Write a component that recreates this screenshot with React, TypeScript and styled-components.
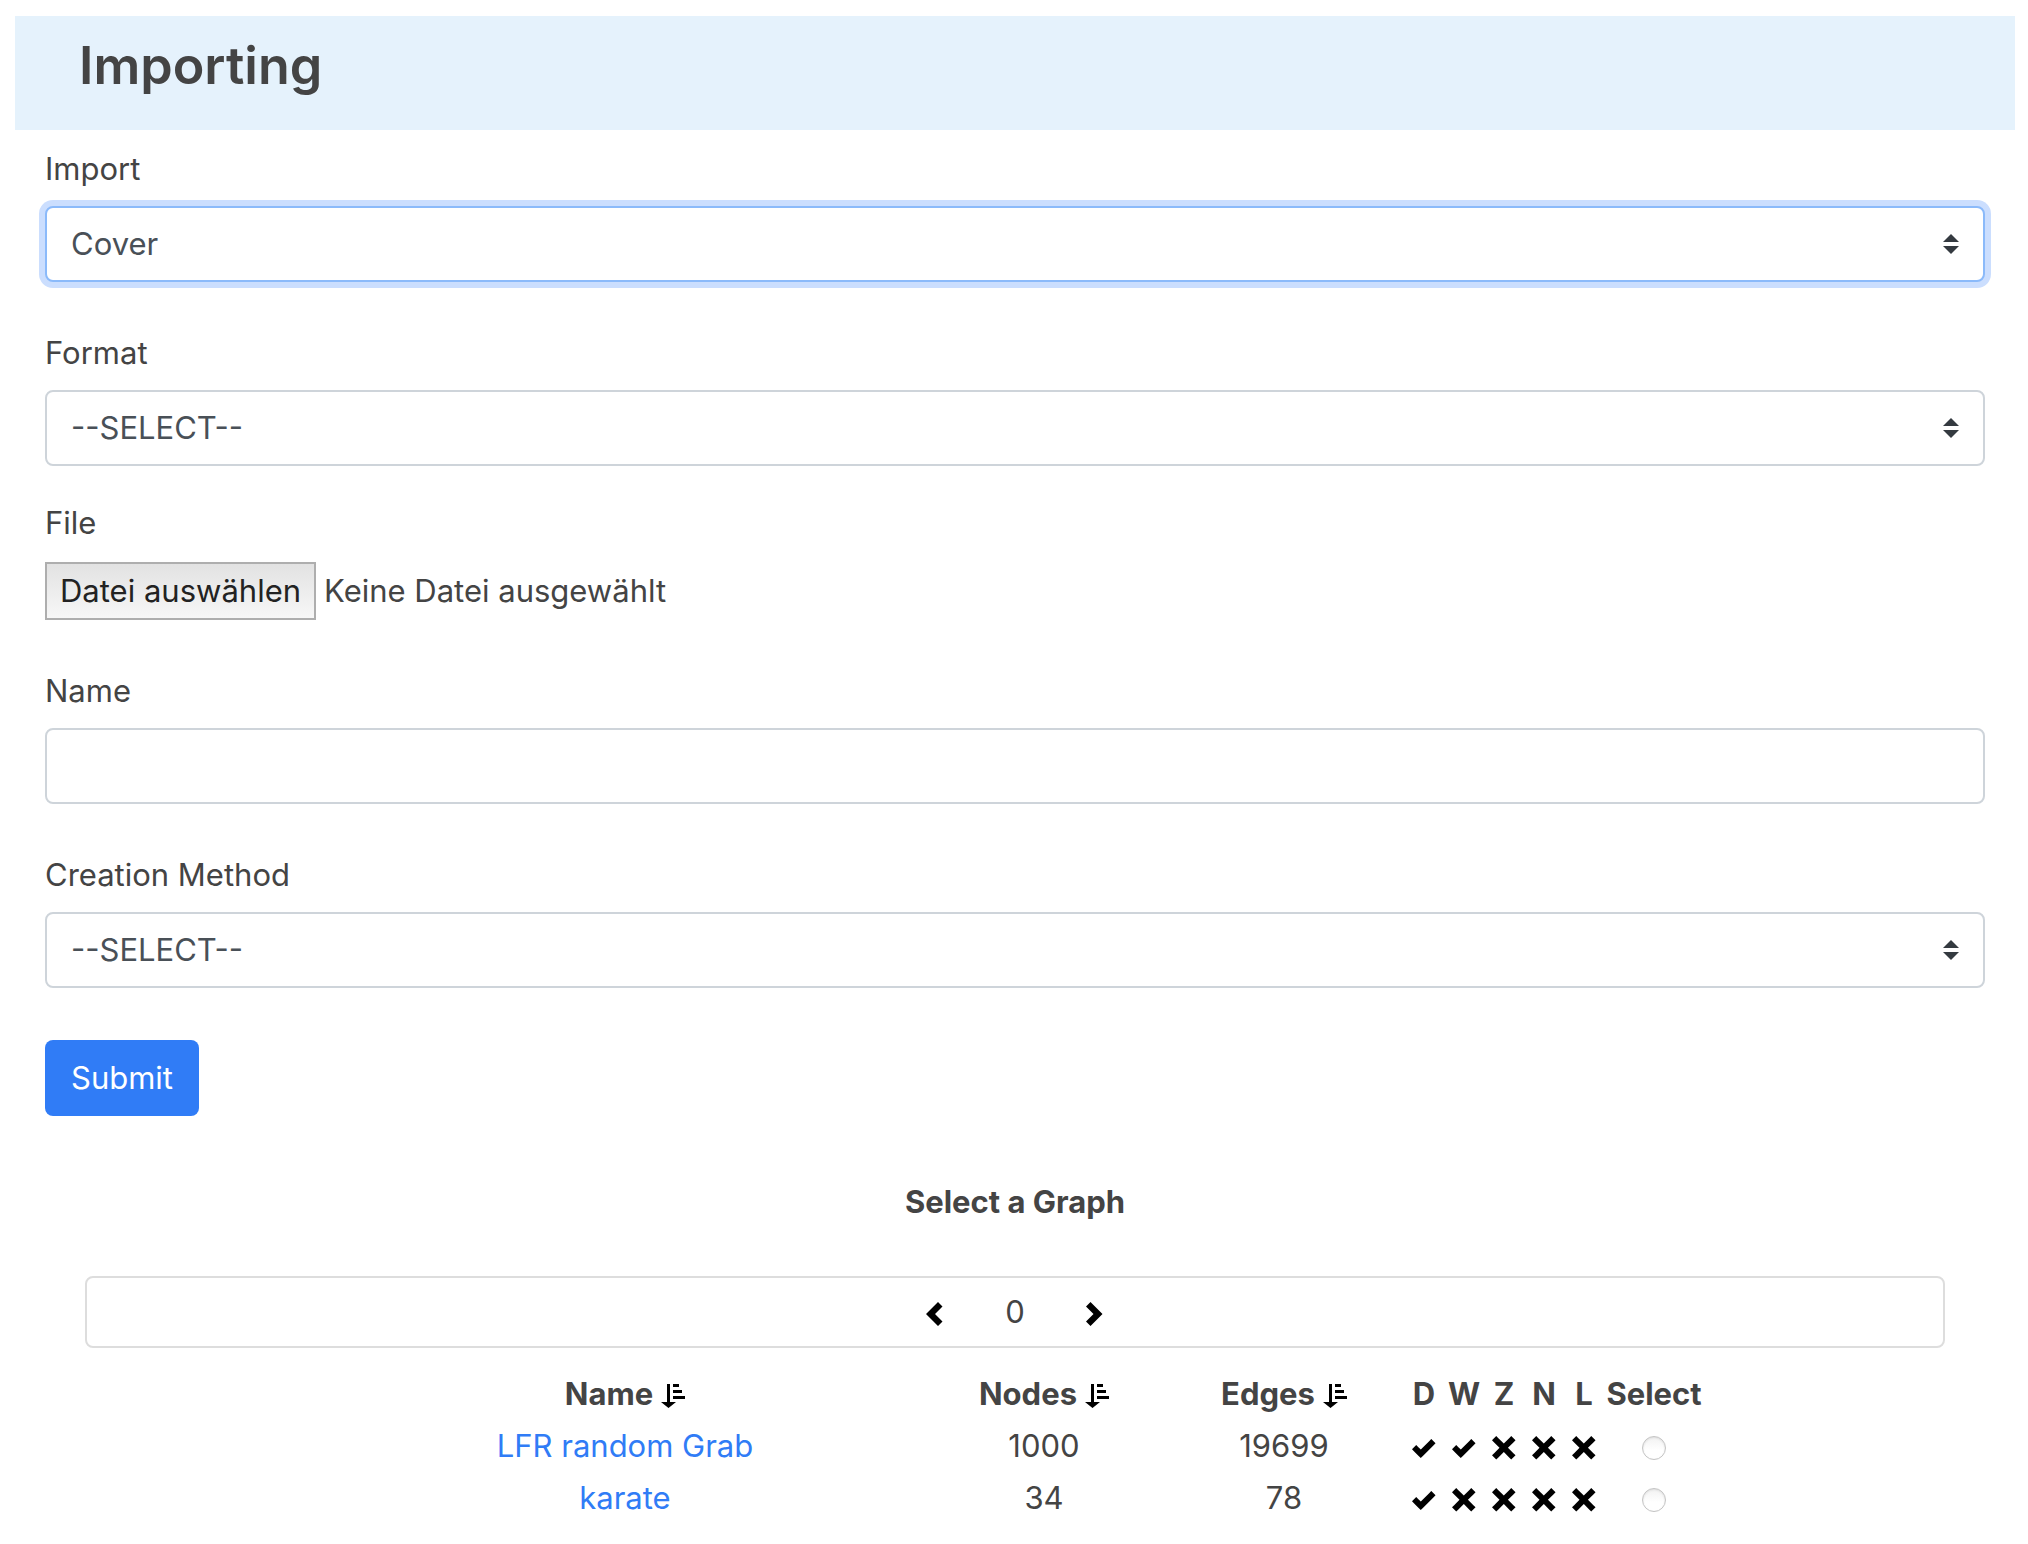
import React, { useState } from "react";
import styled, { createGlobalStyle } from "styled-components";

const GlobalStyle = createGlobalStyle`
  *, *::before, *::after { box-sizing: border-box; }
  body {
    margin: 0;
    background: #fff;
    color: #444;
    font-family: Inter, Roboto, "Liberation Sans", sans-serif;
    font-size: 31px;
    line-height: 48px;
  }
`;

const Page = styled.main`
  padding: 16px 13px 16px 15px;
`;

const Header = styled.header`
  background: #e5f2fc;
  padding: 16px 64px 30px;
`;

const Title = styled.h1`
  margin: 0;
  font-size: 52px;
  line-height: 68px;
  font-weight: 600;
`;

const Form = styled.form`
  padding: 15px 30px 0;
`;

const Field = styled.div<{ $gap?: number }>`
  display: flex;
  flex-direction: column;
  gap: 13px;
  margin-bottom: ${(p) => p.$gap ?? 47}px;
`;

const Label = styled.label`
  align-self: flex-start;
`;

const controlStyles = `
  width: 100%;
  height: 76px;
  margin: 0;
  border: 2px solid #ced4da;
  border-radius: 8px;
  background-color: #fff;
  color: #495057;
  font: inherit;
  outline: none;
`;

const arrows =
  "data:image/svg+xml,%3Csvg xmlns='http://www.w3.org/2000/svg' viewBox='0 0 4 5'%3E%3Cpath fill='%23343a40' d='M2 0L0 2h4zm0 5L0 3h4z'/%3E%3C/svg%3E";

const Select = styled.select<{ $active?: boolean }>`
  ${controlStyles}
  appearance: none;
  padding: 0 56px 0 24px;
  background-image: url("${arrows}");
  background-repeat: no-repeat;
  background-position: right 24px center;
  background-size: 16px 20px;
  ${(p) => p.$active && "border-color: #8bbafa; box-shadow: 0 0 0 6px #cbdefe;"}
`;

const TextInput = styled.input`
  ${controlStyles}
  padding: 0 24px;
`;

const FileRow = styled.div`
  display: flex;
  align-items: center;
  gap: 8px;
  padding-top: 2px;
`;

const FileInput = styled.input`
  position: absolute;
  width: 1px;
  height: 1px;
  opacity: 0;
`;

const FileButton = styled.label`
  padding: 1px 13px;
  border: 2px solid #aeaeae;
  background: linear-gradient(#e2e2e2, #f7f7f7);
  color: #222;
  line-height: 52px;
`;

const SubmitButton = styled.button`
  height: 76px;
  margin-top: 5px;
  padding: 0 26px;
  border: 0;
  border-radius: 8px;
  background: #307cf6;
  color: #fff;
  font: inherit;
`;

const GraphSection = styled.section`
  padding: 60px 70px 0;
  text-align: center;
`;

const SectionTitle = styled.h2`
  margin: 0 0 48px;
  font-size: 31px;
  line-height: 52px;
  font-weight: 700;
`;

const Pager = styled.nav`
  display: flex;
  justify-content: center;
  align-items: center;
  height: 72px;
  border: 2px solid #ddd;
  border-radius: 8px;
`;

const PageNumber = styled.span`
  width: 136px;
`;

const IconButton = styled.button`
  display: inline-flex;
  padding: 4px 0 0;
  border: 0;
  background: none;
  color: #000;
`;

const Icon = styled.svg`
  display: block;
  width: 24px;
  height: 24px;
  fill: #000;
`;

const Table = styled.table`
  table-layout: fixed;
  width: 1378px;
  max-width: 100%;
  margin: 20px auto 0;
  border-collapse: collapse;

  th, td {
    height: 52px;
    padding: 0;
    text-align: center;
    vertical-align: middle;
  }
  th { font-weight: 700; }
`;

const Column = styled.col<{ $width: number }>`
  width: ${(p) => p.$width}px;
`;

const Heading = styled.span`
  display: inline-flex;
  align-items: center;
  gap: 8px;
`;

const Mark = styled.span`
  display: flex;
  justify-content: center;
  padding-top: 4px;
`;

const Link = styled.a`
  color: #307cf6;
  text-decoration: none;
`;

const Radio = styled.input`
  appearance: none;
  display: block;
  width: 24px;
  height: 24px;
  margin: 0;
  border: 1px solid #c4c4c4;
  border-radius: 50%;
  background: linear-gradient(#f2f2f2, #fff 60%);
  box-shadow: inset 0 1px 2px #ddd;

  &:checked { background: radial-gradient(#307cf6 40%, #fff 45%); }
`;

const paths = {
  left: "M5 0l-4 4 4 4 1.500-1.500L4 4l2.500-2.500L5 0z",
  right: "M2.500 0L1 1.500 3.500 4 1 6.500 2.500 8l4-4-4-4z",
  check:
    "M6.410 1l-.69.72-2.780 2.780-.81-.78-.72-.72-1.410 1.410.72.72 1.500 1.500.69.72.72-.72 3.500-3.500.72-.72-1.410-1.410z",
  cross:
    "M1.410 0l-1.410 1.410.72.72 1.780 1.810-1.780 1.780-.72.69 1.410 1.440.72-.72 1.810-1.810 1.780 1.810.69.72 1.440-1.440-.72-.69-1.810-1.780 1.810-1.810.72-.72-1.440-1.410-.69.72-1.780 1.780-1.810-1.780-.72-.72z",
  sort: "M2 0v6h-2l2.500 2 2.500-2h-2v-6h-1zm2 0v1h2v-1h-2zm0 2v1h3v-1h-3zm0 2v1h4v-1h-4z",
};

const Glyph = ({ name }: { name: keyof typeof paths }) => (
  <Icon viewBox="0 0 8 8" aria-hidden="true">
    <path d={paths[name]} />
  </Icon>
);

const flags = ["D", "W", "Z", "N", "L"];

const graphs = [
  { name: "LFR random Grab", nodes: 1000, edges: 19699, types: "DW" },
  { name: "karate", nodes: 34, edges: 78, types: "D" },
];

export default function App() {
  const [page, setPage] = useState(0);

  return (
    <>
      <GlobalStyle />
      <Page>
        <Header>
          <Title>Importing</Title>
        </Header>
        <Form onSubmit={(e) => e.preventDefault()}>
          <Field>
            <Label htmlFor="import">Import</Label>
            <Select id="import" $active>
              <option>Cover</option>
            </Select>
          </Field>
          <Field $gap={33}>
            <Label htmlFor="format">Format</Label>
            <Select id="format">
              <option>--SELECT--</option>
            </Select>
          </Field>
          <Field>
            <Label htmlFor="file">File</Label>
            <FileRow>
              <FileInput id="file" type="file" />
              <FileButton htmlFor="file">Datei auswählen</FileButton>
              <span>Keine Datei ausgewählt</span>
            </FileRow>
          </Field>
          <Field>
            <Label htmlFor="name">Name</Label>
            <TextInput id="name" type="text" />
          </Field>
          <Field>
            <Label htmlFor="method">Creation Method</Label>
            <Select id="method">
              <option>--SELECT--</option>
            </Select>
          </Field>
          <SubmitButton type="submit">Submit</SubmitButton>
        </Form>
        <GraphSection>
          <SectionTitle>Select a Graph</SectionTitle>
          <Pager aria-label="Graph pages">
            <IconButton aria-label="Previous page" onClick={() => setPage(Math.max(0, page - 1))}>
              <Glyph name="left" />
            </IconButton>
            <PageNumber>{page}</PageNumber>
            <IconButton aria-label="Next page" onClick={() => setPage(page + 1)}>
              <Glyph name="right" />
            </IconButton>
          </Pager>
          <Table>
            <colgroup>
              <Column $width={598} />
              <Column $width={240} />
              <Column $width={240} />
              {flags.map((f) => (
                <Column key={f} $width={40} />
              ))}
              <Column $width={100} />
            </colgroup>
            <thead>
              <tr>
                {["Name", "Nodes", "Edges"].map((h) => (
                  <th key={h} scope="col">
                    <Heading>
                      {h}
                      <IconButton aria-label={`Sort by ${h}`}>
                        <Glyph name="sort" />
                      </IconButton>
                    </Heading>
                  </th>
                ))}
                {flags.map((f) => (
                  <th key={f} scope="col">{f}</th>
                ))}
                <th scope="col">Select</th>
              </tr>
            </thead>
            <tbody>
              {graphs.map((g) => (
                <tr key={g.name}>
                  <td><Link href="#">{g.name}</Link></td>
                  <td>{g.nodes}</td>
                  <td>{g.edges}</td>
                  {flags.map((f) => (
                    <td key={f}>
                      <Mark>
                        <Glyph name={g.types.includes(f) ? "check" : "cross"} />
                      </Mark>
                    </td>
                  ))}
                  <td>
                    <Mark>
                      <Radio type="radio" name="graph" aria-label={g.name} />
                    </Mark>
                  </td>
                </tr>
              ))}
            </tbody>
          </Table>
        </GraphSection>
      </Page>
    </>
  );
}
